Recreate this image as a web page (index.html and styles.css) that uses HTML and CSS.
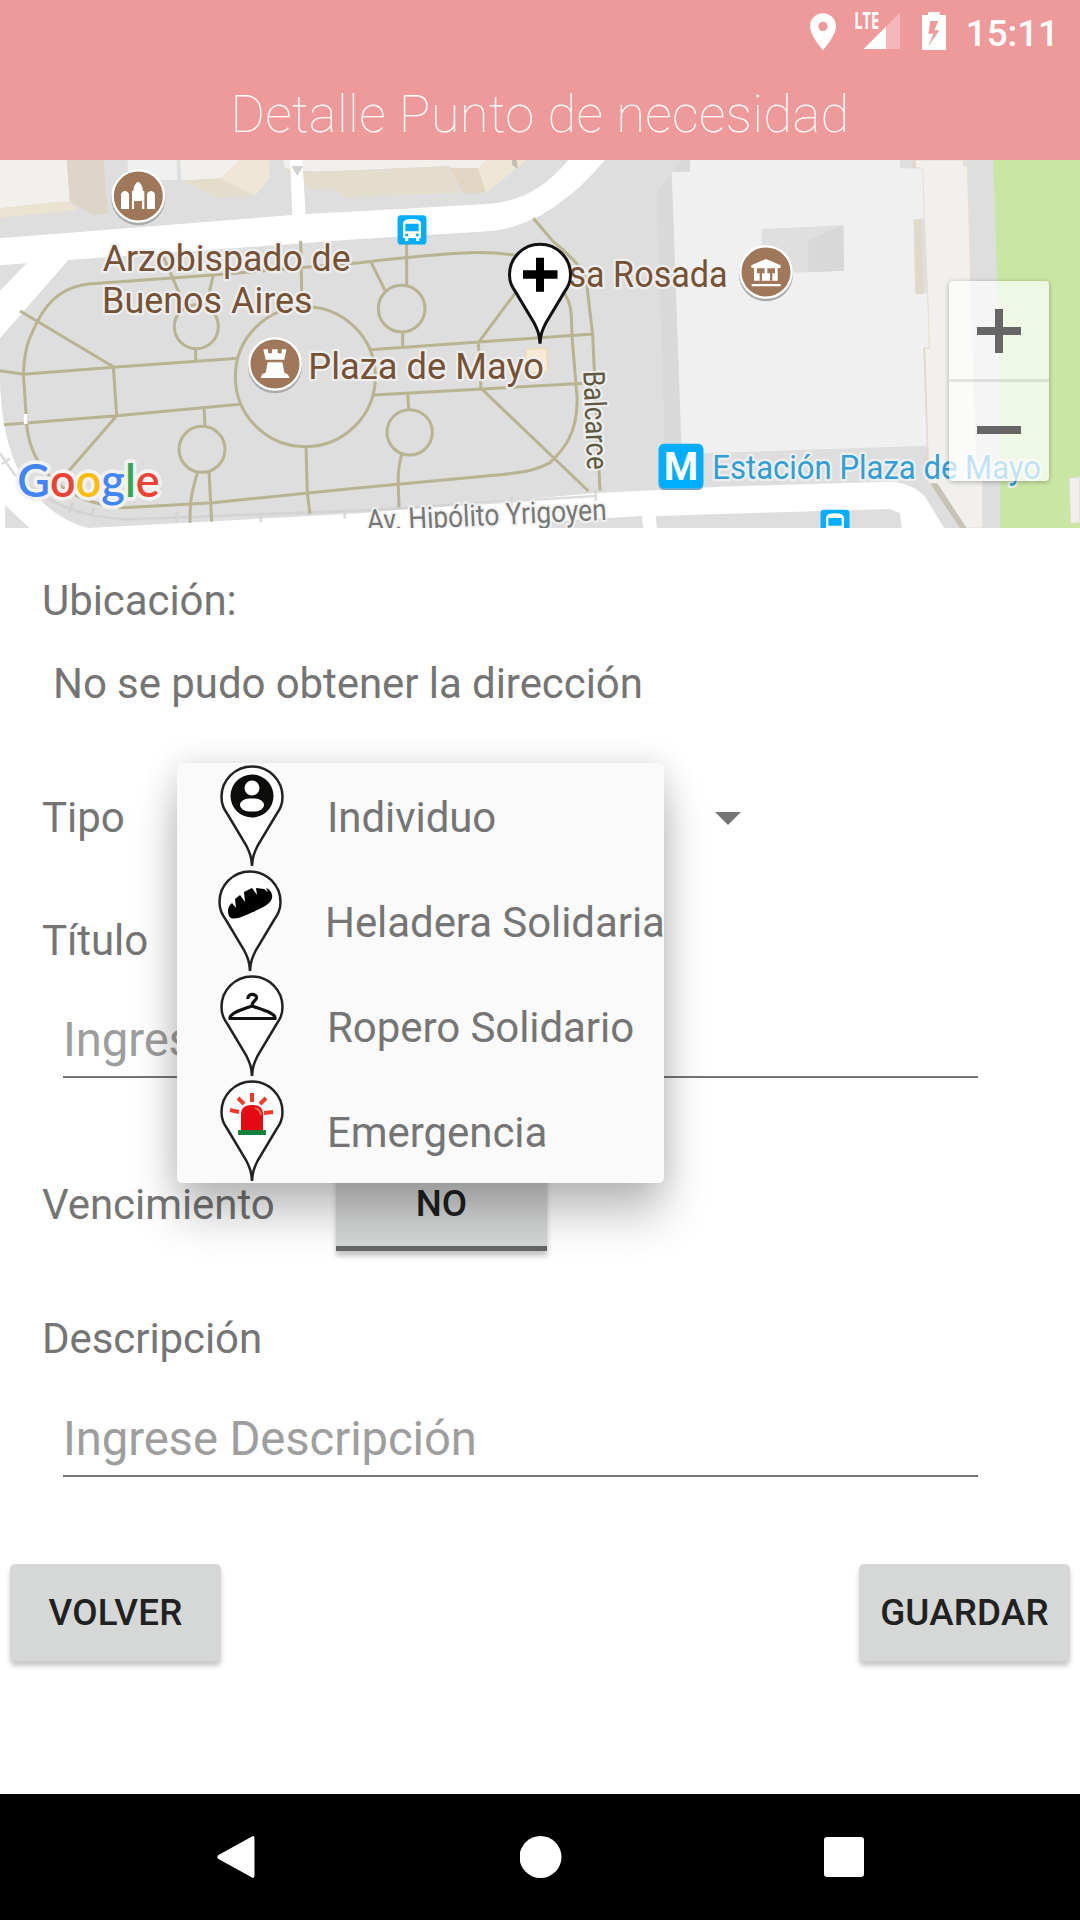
FILE: index.html
```html
<!DOCTYPE html>
<html lang="es">
<head>
<meta charset="utf-8">
<title>Detalle Punto de necesidad</title>
<link rel="stylesheet" href="styles.css">
</head>
<body>
<svg class="defs" width="0" height="0" aria-hidden="true">
  <defs>
    <path id="pin" d="M32 101C31.500 92 30 88 26 80L8 50C4 44 1.500 40 1.500 32A30.500 30.500 0 0 1 62.500 32C62.500 40 60 44 56 50L38 80C34 88 32.500 92 32 101Z"/>
  </defs>
</svg>
<div class="screen">
  <header class="header">
    <div class="status">
      <svg class="status-icons" width="150" height="52" viewBox="0 0 450 156" fill="#fff">
        <path fill-rule="evenodd" d="M39 40C17 40 0 57 0 79C0 107 39 151 39 151S78 107 78 79C78 57 61 40 39 40ZM39 65a14 14 0 1 1 0 28a14 14 0 1 1 0-28Z"/>
        <text x="133" y="87" class="lte" textLength="74" lengthAdjust="spacingAndGlyphs">LTE</text>
        <path d="M161 147L270 38V147Z" opacity=".3"/>
        <path d="M161 147L228 80V147Z"/>
        <path fill-rule="evenodd" d="M336 45H354V36H389V45H408V150H336ZM361 63L355 101H370L355 139L388 91H373L385 63Z"/>
      </svg>
      <span class="clock">15:11</span>
    </div>
    <h1 class="title">Detalle Punto de necesidad</h1>
  </header>

  <section class="map">
    <svg class="map-canvas" width="1080" height="368" viewBox="0 30 3240 1104">
      <rect y="30" width="3240" height="1104" fill="#dedede"/>
      <!-- buildings, north side -->
      <g fill="#f1f0ec">
        <path d="M0 30H200L210 155L175 155L0 175Z"/>
        <path d="M383 30H530L532 90H383Z" fill="#f0f0f0"/>
        <path d="M540 30H720L662 85L545 92Z"/>
        <path d="M848 30H1350V48L1080 60L935 65L855 55Z"/>
      </g>
      <path d="M200 30H310L325 190L280 195L210 155Z" fill="#ddd5c8"/>
      <path d="M0 175L175 155H210L235 180L0 203Z" fill="#ece2d1"/>
      <path d="M545 92L662 85L765 137L655 143Z" fill="#e5dccb"/>
      <path d="M720 30H805L810 82L765 137L662 85Z" fill="#efe7d6"/>
      <path d="M848 55L935 65L1080 60L1350 48L1380 128L1030 142L1000 115L935 118Z" fill="#e4dccc"/>
      <path d="M1350 30H1460L1435 55L1350 53Z" fill="#f1f0ec"/>
      <path d="M1350 53L1435 55L1458 128L1388 128Z" fill="#e2d6c3"/>
      <path d="M1435 55L1460 30H1580L1458 128Z" fill="#efe7d6"/>
      <path d="M1535 30H1550L1553 57L1537 45Z" fill="#c2beb0"/>
      <!-- government house -->
      <path d="M1970 125L2045 30H2100V912H1995Z" fill="#d9d9d9"/>
      <path d="M2070 30H2700V55H2768L2773 205L2740 210L2745 430H2783L2788 590L2770 595L2780 887L2045 912L2015 65H2070Z" fill="#f0f0f0"/>
      <path d="M2285 237L2530 226L2532 362L2285 372Z" fill="#dfdfdf"/>
      <path d="M2425 270L2530 226L2532 362L2425 367Z" fill="#d8d8d8"/>
      <path d="M2745 30H2890V48H2902L2912 390L2930 932H2948V1134H2895L2786 1000L2772 595H2788L2783 430L2773 205L2768 55L2745 52Z" fill="#f1f0ec" stroke="#e8dfcf" stroke-width="3"/>
      <path d="M2740 30H2748V55H2733ZM2742 210L2762 208L2771 432H2749ZM2770 595H2776L2787 960H2764L2783 887Z" fill="#e1d8ca"/>
      <path d="M2790 1000H2812L2900 1134H2880Z" fill="#c8c1b5"/>
      <!-- park -->
      <path d="M2980 30H3240V1134H3000V700Z" fill="#cae6a3"/>
      <path d="M3207 985L3240 980V1118L3212 1120Z" fill="#f1f0ec" stroke="#dcdccf" stroke-width="3"/>
      <!-- streets -->
      <g fill="#fff">
        <path d="M870 30H907L917 192L1080 184L1460 162C1580 155 1650 95 1705 30H1815C1775 75 1740 115 1690 150C1620 205 1540 242 1440 245L1080 267L205 330L0 565V422L80 340L0 346V265L877 195Z"/>
        <path d="M0 690C2 780 15 870 50 950C95 1040 170 1110 265 1134L1080 1090L1780 1030L2160 1010L2670 995C2720 998 2750 1015 2775 1040L2832 1134H0Z"/>
      </g>
      <g fill="#dedede">
        <path d="M15 1065L88 1134H15ZM1640 1115L1925 1098L1930 1134H1640ZM1967 1098L2160 1092L2670 1077L2700 1090L2705 1134H1970Z"/>
      </g>
      <g fill="none" stroke="#cecece" stroke-width="8" opacity=".7">
        <path d="M0 910L45 975C140 1055 230 1102 380 1108L1080 1082L1787 1038M5 942L30 925M220 1055L208 1088M282 1072L274 1104M530 1086V1118M782 1085V1117M1034 1075V1106M1284 1060V1090M1535 1040V1070M1787 1020V1054"/>
      </g>
      <path d="M875 48H910L892 78Z" fill="#d3d1ce"/>
      <path d="M1578 598L1640 595L1643 665L1580 668Z" fill="#f7ead6" stroke="#f1d9a9" stroke-width="3"/>
      <!-- square footpaths -->
      <g fill="none" stroke="#b9b392" stroke-width="9">
        <path d="M265 402L640 375L1080 338C1400 300 1480 303 1560 318C1660 360 1715 440 1714 500L1716 560L1731 740C1735 850 1690 900 1650 938C1600 965 1560 968 1500 974L1080 1013L640 1058L370 1073C200 1060 90 960 80 820L70 670C75 590 85 570 112 515C150 440 200 410 265 402Z"/>
        <path d="M60 483L340 650M0 662L70 673L340 652L715 625M340 650L350 795M12 824L350 797L720 763M350 797L190 982"/>
        <circle cx="916" cy="680" r="210"/>
        <circle cx="589" cy="530" r="66"/>
        <circle cx="606" cy="898" r="69"/>
        <circle cx="1205" cy="476" r="70"/>
        <circle cx="1229" cy="847" r="68"/>
        <path d="M902 272L906 470M587 596V635M490 320L555 470M640 375L618 470M612 770L615 830M593 965C575 1030 570 1040 570 1118M627 965L635 1115M918 890L922 1030L930 1092"/>
        <path d="M1220 280V408M1112 335L1157 425M1208 546V595M1110 599L1780 552M1120 735L1750 700M1223 732L1226 780M1205 912C1190 970 1195 990 1197 1072M1435 578L1443 715L1765 1023M1435 578L1545 430M1600 205L1660 275C1720 325 1755 360 1760 400L1778 555L1800 1022"/>
      </g>
      <path d="M77 792V822" stroke="#fff" stroke-width="11"/>
      <!-- place labels -->
      <g class="label place">
        <text x="308" y="362" textLength="744" lengthAdjust="spacingAndGlyphs">Arzobispado de</text>
        <text x="306" y="490" textLength="632" lengthAdjust="spacingAndGlyphs">Buenos Aires</text>
        <text x="925" y="686" textLength="707" lengthAdjust="spacingAndGlyphs">Plaza de Mayo</text>
        <text x="1583" y="410" textLength="600" lengthAdjust="spacingAndGlyphs">Casa Rosada</text>
      </g>
      <text class="label station" x="2137" y="987" textLength="986" lengthAdjust="spacingAndGlyphs">Estación Plaza de Mayo</text>
      <text class="label street dark" transform="translate(1750 664) rotate(87.700)" textLength="296" lengthAdjust="spacingAndGlyphs">Balcarce</text>
      <text class="label street" transform="translate(1102 1143) rotate(-2.700)" textLength="720" lengthAdjust="spacingAndGlyphs">Av. Hipólito Yrigoyen</text>
      <!-- place badges -->
      <g stroke="#fff" stroke-width="7" fill="#9f785b">
        <g fill="#aaa" stroke="none"><circle cx="415" cy="145" r="81"/><circle cx="825" cy="649" r="81"/><circle cx="2298" cy="373" r="81"/></g>
        <circle cx="415" cy="138" r="77"/><circle cx="825" cy="642" r="77"/><circle cx="2298" cy="366" r="77"/>
      </g>
      <g fill="#fff">
        <path d="M363 177V132Q365 124 375 122Q385 124 387 132V177ZM441 177V132Q443 124 453 122Q463 124 465 132V177ZM396 177V123H400Q402 100 414 95Q427 100 429 123H433V177H426V153H402V177Z"/>
        <path d="M790 598H804V610H816V598H833V610H845V598H859L853 629H797ZM803 637H847L853 668Q866 671 868 684H782Q784 671 797 668Z"/>
        <path d="M2254 346L2298 327L2342 346V354H2333V392H2262V354H2254ZM2255 402H2342V409H2255Z"/>
        <path d="M2271 355H2294V370H2286V392H2279V370H2271ZM2302 355H2325V370H2317V392H2310V370H2302Z" fill="#9f785b"/>
      </g>
      <!-- bus stops and metro -->
      <g id="bus">
        <rect x="1193" y="198" width="86" height="87" rx="10" fill="#0095df" opacity=".5"/>
        <rect x="1193" y="196" width="86" height="86" rx="10" fill="#00aeff"/>
        <path fill="#fff" fill-rule="evenodd" d="M1209 220Q1210 207 1236 207T1263 220V264H1258V273H1248V264H1225V273H1215V264H1209ZM1216 221V244H1256V221ZM1216 251V259H1224V251ZM1248 251V259H1256V251Z"/>
      </g>
      <use href="#bus" x="1269" y="883"/>
      <rect x="1976" y="884" width="134" height="136" rx="16" fill="#78a8c4"/>
      <rect x="1976" y="881" width="134" height="134" rx="16" fill="#00aeff"/>
      <text x="2043" y="990" class="metro">M</text>
      <text class="google" x="52" y="1042" textLength="427" lengthAdjust="spacingAndGlyphs"><tspan fill="#4285f4">G</tspan><tspan fill="#ea4335">o</tspan><tspan fill="#fbbc05">o</tspan><tspan fill="#4285f4">g</tspan><tspan fill="#34a853">l</tspan><tspan fill="#ea4335">e</tspan></text>
      <!-- selected point -->
      <g transform="translate(1524 278) scale(3)">
        <use href="#pin" fill="#fff" stroke="#111" stroke-width="3"/>
        <path d="M28 15H36V27.500H49.500V36H36V49H28V36H15V27.500H28Z"/>
      </g>
    </svg>
    <div class="zoom">
      <button class="zoom-btn"><svg width="44" height="44"><path d="M0 18H18V0H26V18H44V26H26V44H18V26H0Z"/></svg></button>
      <button class="zoom-btn"><svg width="44" height="44"><path d="M0 18H44V26H0Z"/></svg></button>
    </div>
  </section>

  <main class="form">
    <p class="text">Ubicación:</p>
    <p class="text address">No se pudo obtener la dirección</p>
    <div class="row type-row">
      <label class="text">Tipo</label>
      <svg class="caret" width="26" height="13"><path d="M0 0H26L13 13Z"/></svg>
    </div>
    <label class="text label-title">Título</label>
    <div class="field">Ingrese Título</div>
    <div class="row expiry-row">
      <label class="text">Vencimiento</label>
      <button class="btn toggle">NO</button>
    </div>
    <label class="text label-desc">Descripción</label>
    <div class="field field-desc">Ingrese Descripción</div>
    <div class="row actions">
      <button class="btn">VOLVER</button>
      <button class="btn">GUARDAR</button>
    </div>

    <ul class="menu">
      <li class="option">
        <svg width="66" height="104"><use href="#pin" fill="#fff" stroke="#222" stroke-width="2.500"/><circle cx="32" cy="31" r="21.500" fill="#0c0c0a"/><circle cx="32" cy="23" r="7.500" fill="#fff"/><rect x="20" y="33.500" width="24" height="13" rx="9" ry="6.500" fill="#fff"/></svg>
        <span>Individuo</span>
      </li>
      <li class="option wide">
        <svg width="66" height="104"><use href="#pin" fill="#fff" stroke="#222" stroke-width="2.500"/><path d="M11 46C9 41 10 36 14 33L18 38L17 29L22 25L27 32L26 22L34 18L39 25L38 18L46 19L50 22L48 18C52 19 55 24 54 28C53 34 44 38 35 42C26 46 14 52 11 46Z"/></svg>
        <span>Heladera Solidaria</span>
      </li>
      <li class="option">
        <svg width="66" height="104"><use href="#pin" fill="#fff" stroke="#222" stroke-width="2.500"/><path d="M28 24C27 18 37 18 36.500 23C36 26 32 26 32 31C24 34 9 38 10 43.500H55C56 38 40 34 32 31" fill="none" stroke="#111" stroke-width="3.200"/></svg>
        <span>Ropero Solidario</span>
      </li>
      <li class="option">
        <svg width="66" height="104"><use href="#pin" fill="#fff" stroke="#222" stroke-width="2.500"/><path d="M21 50V34Q21 25 32 25T43 34V50Z" fill="#e50914"/><path d="M32 13V22M18 18L24 24M46 18L40 24M10 30L19 32M53 32L44 33" stroke="#f23a2c" stroke-width="4" fill="none"/><path d="M35 28Q40 29 41 35" stroke="#f2644c" stroke-width="2" fill="none"/><path d="M18 50H46V55H18Z" fill="#16803f"/></svg>
        <span>Emergencia</span>
      </li>
    </ul>
  </main>

  <nav class="navbar">
    <svg width="44" height="44" fill="#fff"><path d="M1.500 20L35 1.500Q37.500 0 37.500 4V40Q37.500 44 35 42.500L1.500 24Q-1 22 1.500 20Z"/></svg>
    <svg width="44" height="44" fill="#fff"><circle cx="20.500" cy="22" r="21"/></svg>
    <svg width="44" height="44" fill="#fff"><rect x="2" y="2" width="40" height="40" rx="3"/></svg>
  </nav>
</div>
</body>
</html>
```

FILE: styles.css
```css
* { box-sizing: border-box; margin: 0; padding: 0; }
body { font-family: Roboto, "Liberation Sans", sans-serif; background: #fff; }
button { font-family: inherit; border: 0; }
svg { display: block; flex: none; }
.defs { position: absolute; }

.screen {
  width: 1080px;
  height: 1920px;
  display: flex;
  flex-direction: column;
  overflow: hidden;
}

.header { height: 160px; background: #ef9a9a; color: #fff; }
.status {
  height: 63px;
  display: flex;
  justify-content: flex-end;
  padding-right: 21px;
}
.status-icons { margin-right: 6px; }
.lte { font: 700 67px "Open Sans", sans-serif; }
.clock { font-size: 36.750px; font-weight: 500; line-height: 67px; }
.title { font-size: 52.500px; font-weight: 100; line-height: 62px; padding-top: 20px; text-align: center; letter-spacing: .33px; }

.map { position: relative; height: 368px; }
.label { stroke: #f2f2f2; stroke-opacity: .85; stroke-width: 14px; stroke-linejoin: round; paint-order: stroke; }
.place { font-size: 111px; fill: #755135; }
.station { font-size: 101px; fill: #319fd3; }
.street { font-size: 90px; fill: #777; }
.dark { fill: #5f5942; }
.metro { font: 700 118px Roboto, sans-serif; fill: #fff; text-anchor: middle; }
.google { font: 600 138px Lato, sans-serif; stroke: #f2f2f2; stroke-width: 22px; stroke-linejoin: round; paint-order: stroke; }
.zoom {
  position: absolute;
  top: 121px;
  right: 31px;
  width: 100px;
  height: 200px;
  display: flex;
  flex-direction: column;
  background: rgba(255, 255, 255, .7);
  border-radius: 4px;
  box-shadow: 0 1px 5px rgba(0, 0, 0, .3);
}
.zoom-btn { flex: 1; display: flex; justify-content: center; align-items: center; background: none; fill: #666; }
.zoom-btn:first-child { padding-top: 2px; }
.zoom-btn + .zoom-btn { border-top: 3px solid rgba(0, 0, 0, .09); padding-bottom: 3px; }

.form { position: relative; flex: 1; display: flex; flex-direction: column; padding-top: 48px; }
.text { display: block; font-size: 42px; line-height: 50px; color: #757575; padding-left: 42px; letter-spacing: -.07px; }
.address { margin-top: 33px; padding-left: 53px; }
.row { display: flex; }
.type-row { margin-top: 84px; align-items: center; justify-content: space-between; padding-right: 339px; }
.caret { fill: #757575; }
.label-title { margin-top: 73px; }
.field {
  margin: 45px 102px 0 63px;
  height: 67px;
  padding-top: 1px;
  font-size: 47.250px;
  line-height: 56px;
  letter-spacing: -.1px;
  color: #9e9e9e;
  border-bottom: 2px solid #757575;
}
.expiry-row { height: 94px; margin-top: 79px; }
.expiry-row .text { width: 336px; padding-top: 23px; }
.btn {
  width: 211px;
  height: 97px;
  background: #d6d8d7;
  color: #212121;
  font-size: 36.750px;
  font-weight: 500;
  line-height: 98px;
  letter-spacing: .2px;
  border-radius: 5px;
  box-shadow: 0 5px 5px rgba(0, 0, 0, .22);
}
.toggle { height: 94px; line-height: 94px; border-radius: 0; border-bottom: 5px solid #666867; letter-spacing: 0; }
.label-desc { margin-top: 63px; }
.field-desc { margin-top: 46px; }
.actions { justify-content: space-between; padding: 0 10px; margin-top: 87px; }

.menu {
  position: absolute;
  left: 177px;
  top: 235px;
  width: 487px;
  height: 420px;
  background: #fafafa;
  border-radius: 5px;
  list-style: none;
  box-shadow: 0 32px 46px rgba(0, 0, 0, .24), 0 0 32px rgba(0, 0, 0, .13);
}
.option {
  height: 105px;
  display: flex;
  padding: 2px 0 0 43px;
  font-size: 42px;
  line-height: 105px;
  letter-spacing: -.07px;
  color: #757575;
  white-space: nowrap;
}
.option span { padding-left: 41px; }
.wide { padding-left: 41px; }

.navbar { height: 126px; background: #000; display: flex; justify-content: space-between; align-items: center; padding: 0 214px 0 217px; }
```
